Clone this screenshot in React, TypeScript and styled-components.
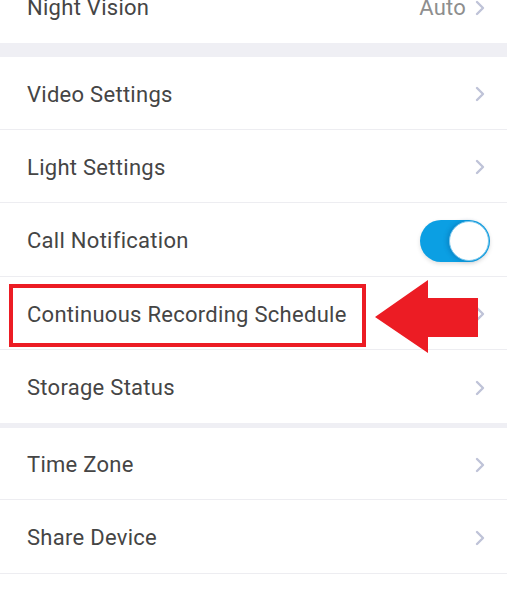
import React from "react";
import styled, { createGlobalStyle } from "styled-components";

const Global = createGlobalStyle`
  html, body { margin: 0; padding: 0; background: #ffffff; }
  body { font-family: Roboto, "Noto Sans", "Liberation Sans", sans-serif; overflow: hidden; }
  * { box-sizing: border-box; }
`;

const Page = styled.div`
  position: relative;
  width: 507px;
  height: 602px;
  overflow: hidden;
  background: #ffffff;
`;

const Scroll = styled.div`
  display: flex;
  flex-direction: column;
  margin-top: -30px;
`;

const Group = styled.div`
  display: flex;
  flex-direction: column;
  background: #ffffff;
`;

const Gap = styled.div<{ $h: number }>`
  height: ${(p) => p.$h}px;
  background: #efeff4;
`;

const Row = styled.div<{ $h?: number; $last?: boolean }>`
  height: ${(p) => p.$h ?? 73}px;
  display: flex;
  align-items: center;
  padding: 2px 22px 0 27px;
  border-bottom: ${(p) => (p.$last ? "none" : "1px solid #ededf1")};
`;

const Label = styled.span`
  flex: 1;
  font-size: 22px;
  font-weight: 400;
  color: #454545;
  letter-spacing: 0.28px;
`;

const Value = styled.span`
  font-size: 22px;
  color: #8e8e8e;
  letter-spacing: 0.2px;
  margin-right: 9px;
`;

const Toggle = styled.div`
  width: 70px;
  height: 42px;
  border-radius: 21px;
  background: #0b9fe3;
  position: relative;
  margin-right: -5px;
  box-shadow: 0 2px 4px rgba(0, 0, 0, 0.12);
`;

const Knob = styled.div`
  position: absolute;
  right: 1px;
  top: 1px;
  width: 40px;
  height: 40px;
  border-radius: 50%;
  background: #ffffff;
  border: 1px solid #7cc8ee;
  box-shadow: -2px 0 4px rgba(0, 60, 120, 0.25);
`;

const HighlightBox = styled.div`
  position: absolute;
  left: 9px;
  top: 284px;
  width: 357px;
  height: 63px;
  border: 4px solid #ec1c24;
  pointer-events: none;
`;

const ArrowSvg = styled.svg`
  position: absolute;
  left: 370px;
  top: 276px;
`;

const Chevron = () => (
  <svg width="10" height="16" viewBox="0 0 10 16">
    <path d="M2 2 L8 8 L2 14" fill="none" stroke="#bfc3d8" strokeWidth="2.4" strokeLinecap="round" strokeLinejoin="round" />
  </svg>
);

export default function App() {
  return (
    <Page>
      <Global />
      <Scroll>
        <Group>
          <Row $last>
            <Label>Night Vision</Label>
            <Value>Auto</Value>
            <Chevron />
          </Row>
        </Group>
        <Gap $h={14} />
        <Group>
          <Row>
            <Label>Video Settings</Label>
            <Chevron />
          </Row>
          <Row>
            <Label>Light Settings</Label>
            <Chevron />
          </Row>
          <Row $h={74}>
            <Label>Call Notification</Label>
            <Toggle>
              <Knob />
            </Toggle>
          </Row>
          <Row>
            <Label>Continuous Recording Schedule</Label>
            <Chevron />
          </Row>
          <Row $last>
            <Label>Storage Status</Label>
            <Chevron />
          </Row>
        </Group>
        <Gap $h={5} />
        <Group>
          <Row $h={72}>
            <Label>Time Zone</Label>
            <Chevron />
          </Row>
          <Row $h={74}>
            <Label>Share Device</Label>
            <Chevron />
          </Row>
        </Group>
      </Scroll>
      <HighlightBox />
      <ArrowSvg width="112" height="82" viewBox="370 276 112 82">
        <polygon
          points="375,317 428,280 428,298 478,298 478,337 428,337 428,353"
          fill="#ec1c24"
        />
      </ArrowSvg>
    </Page>
  );
}
